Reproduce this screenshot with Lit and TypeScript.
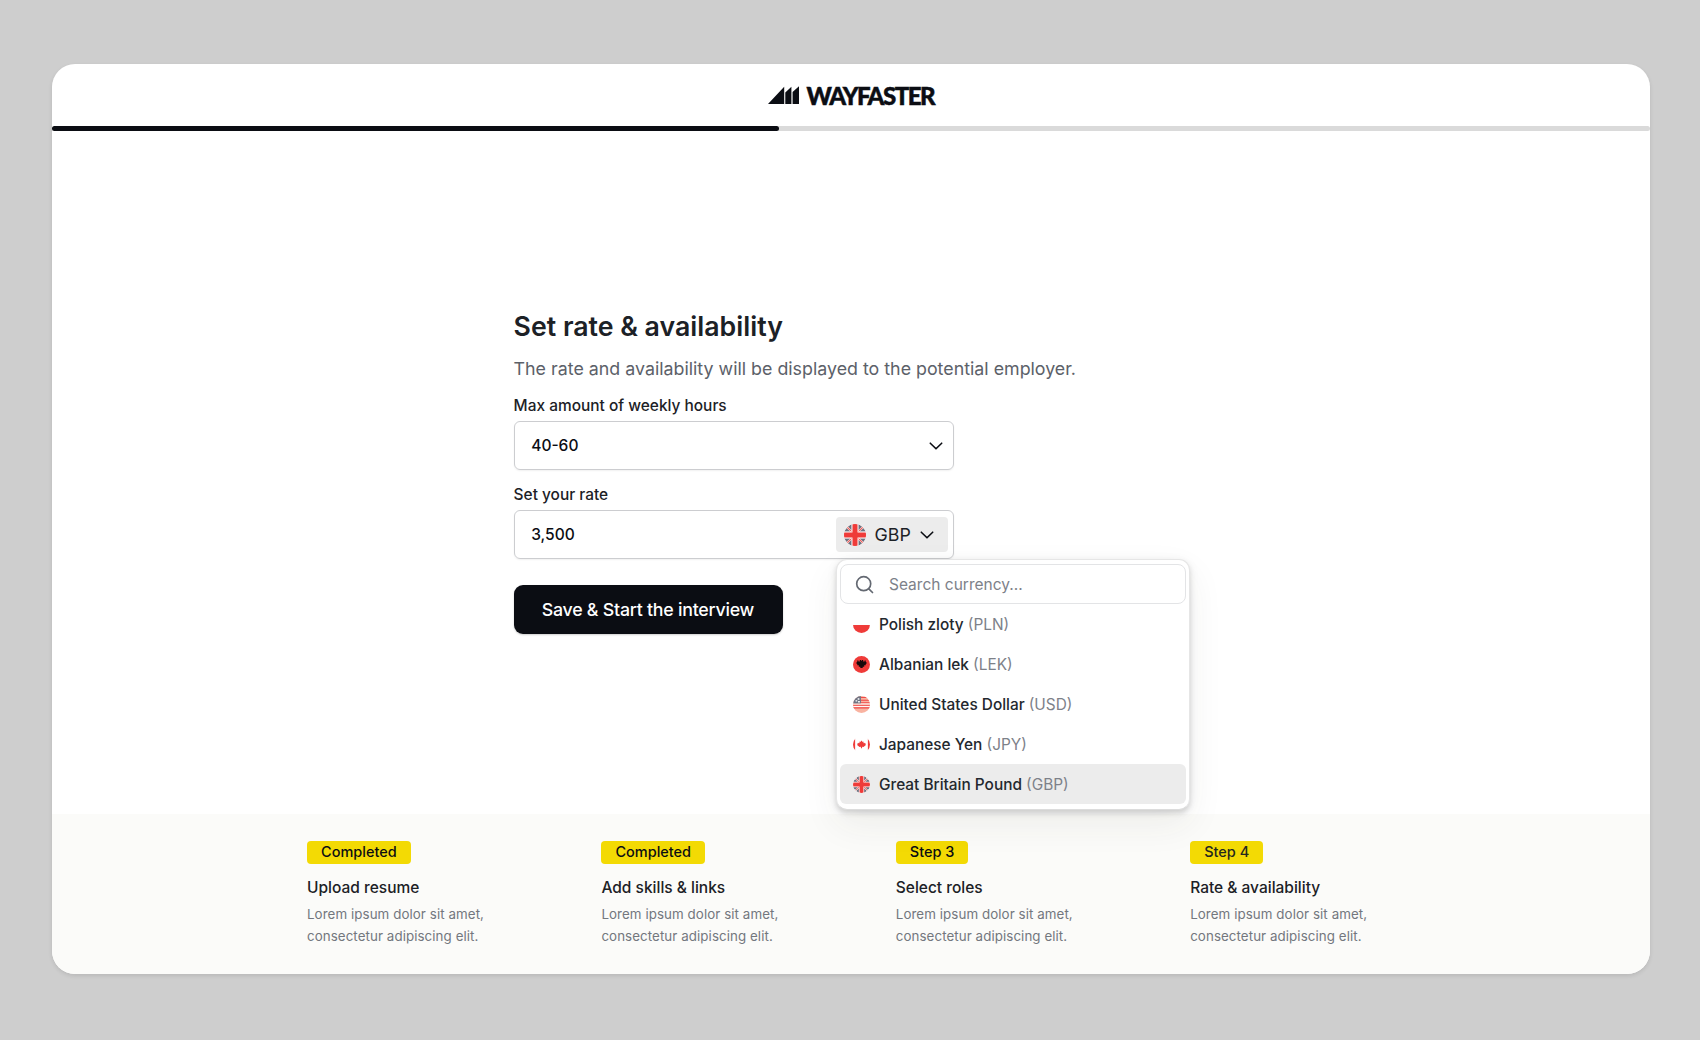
import { LitElement, html, css, svg, nothing } from 'lit';
import { customElement, property, state } from 'lit/decorators.js';

interface Currency {
  code: string;
  name: string;
  flag: string;
}

interface Step {
  badge: string;
  title: string;
  muted?: boolean;
}

const CURRENCIES: Currency[] = [
  { code: 'PLN', name: 'Polish zloty', flag: 'pl' },
  { code: 'LEK', name: 'Albanian lek', flag: 'al' },
  { code: 'USD', name: 'United States Dollar', flag: 'us' },
  { code: 'JPY', name: 'Japanese Yen', flag: 'ca' },
  { code: 'GBP', name: 'Great Britain Pound', flag: 'gb' },
];

const STEPS: Step[] = [
  { badge: 'Completed', title: 'Upload resume' },
  { badge: 'Completed', title: 'Add skills & links' },
  { badge: 'Step 3', title: 'Select roles' },
  { badge: 'Step 4', title: 'Rate & availability', muted: true },
];

// All flags share a 20x20 viewBox and are clipped to a circle by the svg's border radius
const FLAGS: Record<string, unknown> = {
  pl: svg`
    <rect width="20" height="20" fill="#fff" />
    <rect y="10.6" width="20" height="9.4" fill="#ef3b39" />
  `,
  al: svg`
    <rect width="20" height="20" fill="#ef3b39" />
    <path
      fill="#15090b"
      d="M8 4.6h1.2l.8 1.2.8-1.2H12v1.800h1.600V5.400H15v1.800h.8v2.200H15v1.600h-1.800v1.600h-1.800v1.400H8.600v-1.400H6.800V11H5V9.400h-.8V7.200H5V5.400h1.400v1H8z"
    />
  `,
  us: svg`
    <rect width="20" height="20" fill="#f9b3a1" />
    <path stroke="#ef4a48" stroke-width="1.3" d="M9 1.8h11M9 5h11M9 7.9h11M0 10.9h20M0 14h20" />
    <path stroke="#fff" stroke-width="1.1" d="M0 9.4h20M0 12.4h20" />
    <rect width="9.3" height="8.7" fill="#6f7483" />
    <path fill="#fff" d="M5.5 2.5h2v2h-2zM3 5h2v1.5H3zM6 6h2v1.5H6z" />
  `,
  ca: svg`
    <rect width="20" height="20" fill="#fff" />
    <path fill="#ef3b39" d="M0 3h2.5v14H0zM17.5 3H20v14h-2.5z" />
    <path
      fill="#ef3b39"
      d="m10 5.2 1.4 1.8 1-.4v2l1.200-.7.4.8h1.200l-.5 1.400.5.600-2.900 2.100-1.600-.2v1.900H9.300v-1.900l-1.600.2-2.900-2.100.5-.6-.5-1.400H6l.4-.8 1.200.7v-2l1 .4z"
    />
  `,
  gb: svg`
    <rect width="20" height="20" fill="#fdf0ee" />
    <path
      fill="#6d7280"
      d="M3.6 2.2 6.9 0v5.7zM16.4 2.2 13.1 0v5.7zM3.6 17.8 6.9 20v-5.7zM16.4 17.8 13.1 20v-5.7zM2.2 3.6 0 6.9h5.7zM17.8 3.6 20 6.9h-5.7zM2.2 16.4 0 13.1h5.7zM17.8 16.4 20 13.1h-5.7z"
    />
    <path stroke="#ef5a57" stroke-width="1" d="m3 3 4 4M17 3l-4 4M3 17l4-4M17 17l-4-4" />
    <path fill="#fff" d="M7 0h6v7h7v6h-7v7H7v-7H0V7h7z" />
    <path fill="#ef3b39" d="M7.7 0h4.6v7.7H20v4.6h-7.7V20H7.7v-7.7H0V7.7h7.7z" />
  `,
};

@customElement('flag-icon')
export class FlagIcon extends LitElement {
  @property({ type: String })
  country = 'gb';

  static styles = css`
    :host {
      display: block;
      flex: none;
      width: 17px;
      height: 17px;
    }

    svg {
      display: block;
      width: 100%;
      height: 100%;
      border-radius: 50%;
    }
  `;

  render() {
    return html`<svg viewBox="0 0 20 20" aria-hidden="true">${FLAGS[this.country] ?? nothing}</svg>`;
  }
}

@customElement('currency-menu')
export class CurrencyMenu extends LitElement {
  @property({ type: String })
  selected = 'GBP';

  static styles = css`
    :host {
      display: block;
      box-sizing: border-box;
      width: 354px;
      padding: 4px 3px 5px;
      border: 1px solid #e6e6e6;
      border-bottom-color: #dcdcdc;
      border-radius: 11px;
      background: #fff;
      box-shadow:
        0 3px 5px rgba(0, 0, 0, 0.13),
        0 2px 12px rgba(0, 0, 0, 0.06),
        0 14px 36px rgba(60, 60, 40, 0.07);
    }

    .search {
      display: flex;
      align-items: center;
      gap: 15px;
      box-sizing: border-box;
      height: 40px;
      padding-left: 14px;
      border: 1px solid #e3e4e6;
      border-radius: 8px;
      color: #7d8189;
      font-size: 15.5px;
      font-weight: 400;
    }

    .search svg {
      width: 19px;
      height: 19px;
    }

    .option {
      display: flex;
      align-items: center;
      gap: 9px;
      height: 40px;
      padding-left: 13px;
      border-radius: 6px;
      color: #23282e;
      font-size: 15.4px;
      font-weight: 500;
      cursor: pointer;
    }

    .option.active {
      background: #ececec;
    }

    .code {
      color: #7d8189;
      font-weight: 400;
    }
  `;

  private select(code: string) {
    this.dispatchEvent(new CustomEvent('currency-change', { detail: code }));
  }

  render() {
    return html`
      <div class="search">
        <svg viewBox="0 0 19 19" fill="none" stroke="#646972" stroke-width="1.7" stroke-linecap="round">
          <circle cx="8.7" cy="8.7" r="7" />
          <path d="m13.8 13.8 3.7 3.7" />
        </svg>
        <span>Search currency...</span>
      </div>
      ${CURRENCIES.map(
        (c) => html`
          <div class="option ${c.code === this.selected ? 'active' : ''}" @click=${() => this.select(c.code)}>
            <flag-icon country=${c.flag}></flag-icon>
            <span>${c.name} <span class="code">(${c.code})</span></span>
          </div>
        `
      )}
    `;
  }
}

@customElement('app-root')
export class AppRoot extends LitElement {
  @property({ type: Number })
  progress = 45.5;

  @state()
  private currency = 'GBP';

  static styles = css`
    :host {
      display: block;
      box-sizing: border-box;
      height: 1040px;
      padding: 64px 50px 66px 52px;
      background: #cecece;
      font-family: Inter, 'Liberation Sans', sans-serif;
      color: #1c2126;
    }

    .window {
      display: flex;
      flex-direction: column;
      height: 100%;
      border-radius: 23px;
      background: #fff;
      box-shadow: 0 2px 4px rgba(0, 0, 0, 0.1);
    }

    header {
      display: flex;
      align-items: center;
      justify-content: center;
      gap: 7.5px;
      height: 62px;
      color: #0b0d13;
    }

    .mark {
      width: 31px;
      height: 18px;
    }

    .wordmark {
      padding-top: 1px;
      font-family: Lato, Inter, sans-serif;
      font-size: 24px;
      font-weight: 900;
      line-height: 24px;
      letter-spacing: -1.5px;
      -webkit-text-stroke: 0.5px currentColor;
    }

    .track {
      height: 5px;
      border-radius: 3px;
      background: #dadada;
    }

    .fill {
      height: 100%;
      border-radius: 3px;
      background: #0b0d13;
    }

    main {
      flex: 1;
      padding: 178px 0 0 461.6px;
    }

    h1 {
      margin: 0;
      font-size: 26.7px;
      line-height: 34px;
      font-weight: 600;
    }

    .lead {
      margin: 14px 0 0;
      color: #5c6169;
      font-size: 17.82px;
      line-height: 24px;
    }

    .label {
      margin: 15px 0 5px;
      font-size: 15.45px;
      line-height: 20px;
      font-weight: 500;
    }

    .field {
      position: relative;
      display: flex;
      align-items: center;
      justify-content: space-between;
      box-sizing: border-box;
      width: 440.4px;
      height: 49px;
      padding-left: 16.6px;
      border: 1px solid #cccdd0;
      border-radius: 6px;
      box-shadow: 0 1px 2px rgba(0, 0, 0, 0.06);
      color: #0b0d13;
      font-size: 15.55px;
      font-weight: 500;
    }

    .select {
      padding-right: 9px;
    }

    .rate {
      padding-right: 5.4px;
    }

    .chevron {
      width: 16px;
      height: 16px;
    }

    .chip {
      display: flex;
      align-items: center;
      box-sizing: border-box;
      width: 112px;
      height: 35px;
      padding-left: 8.5px;
      border-radius: 4px;
      background: #ececec;
      color: #1c2126;
      font-size: 17.8px;
      font-weight: 400;
    }

    .chip flag-icon {
      width: 22px;
      height: 22px;
      margin-right: 8.5px;
    }

    .chip .chevron {
      margin-left: 8.5px;
    }

    currency-menu {
      position: absolute;
      top: 48px;
      left: 321.4px;
      z-index: 1;
    }

    .submit {
      display: block;
      width: 269.6px;
      height: 49px;
      margin-top: 26.4px;
      padding: 0 1px 0 0;
      border: 0;
      border-radius: 9px;
      background: #0b0d13;
      box-shadow: 0 1px 2px rgba(0, 0, 0, 0.2);
      color: #fff;
      font: 500 17.8px Inter, sans-serif;
      letter-spacing: -0.24px;
    }

    footer {
      display: grid;
      grid-template-columns: repeat(4, 294.4px);
      box-sizing: border-box;
      height: 160px;
      padding: 27px 0 0 255px;
      border-radius: 0 0 23px 23px;
      background: #fbfbf9;
    }

    .badge {
      display: inline-block;
      padding: 0 14px;
      border-radius: 4px;
      background: #f3da04;
      color: #0b0d13;
      font-size: 14.5px;
      line-height: 22.5px;
      font-weight: 500;
    }

    .badge.muted {
      color: #23271f;
    }

    .title {
      margin-top: 14.5px;
      font-size: 15.5px;
      line-height: 20px;
      font-weight: 500;
    }

    .text {
      margin-top: 5px;
      color: #73777e;
      font-size: 13.35px;
      line-height: 22px;
      letter-spacing: 0.07px;
    }
  `;

  private renderChevron() {
    return html`
      <svg class="chevron" viewBox="0 0 16 16" fill="none" stroke="#0b0d13" stroke-width="1.6" stroke-linecap="round" stroke-linejoin="round">
        <path d="m2.3 5.2 5.7 5.6 5.7-5.6" />
      </svg>
    `;
  }

  private renderStep(step: Step) {
    return html`
      <div class="step">
        <span class="badge ${step.muted ? 'muted' : ''}">${step.badge}</span>
        <div class="title">${step.title}</div>
        <div class="text">Lorem ipsum dolor sit amet,<br />consectetur adipiscing elit.</div>
      </div>
    `;
  }

  render() {
    return html`
      <div class="window">
        <header>
          <svg class="mark" viewBox="0 0 31 18" fill="currentColor">
            <path d="M0 18 16.2.8V18zM17.3 18V6.5L23.4.8V18zM24.6 18V6L31 .3V18z" />
          </svg>
          <span class="wordmark">WAYFASTER</span>
        </header>
        <div class="track"><div class="fill" style="width: ${this.progress}%"></div></div>
        <main>
          <h1>Set rate &amp; availability</h1>
          <p class="lead">The rate and availability will be displayed to the potential employer.</p>
          <div class="label">Max amount of weekly hours</div>
          <div class="field select"><span>40-60</span>${this.renderChevron()}</div>
          <div class="label">Set your rate</div>
          <div class="field rate">
            <span>3,500</span>
            <div class="chip">
              <flag-icon country="gb"></flag-icon>
              <span>${this.currency}</span>
              ${this.renderChevron()}
            </div>
            <currency-menu
              .selected=${this.currency}
              @currency-change=${(e: CustomEvent<string>) => (this.currency = e.detail)}
            ></currency-menu>
          </div>
          <button class="submit">Save &amp; Start the interview</button>
        </main>
        <footer>${STEPS.map((step) => this.renderStep(step))}</footer>
      </div>
    `;
  }
}
